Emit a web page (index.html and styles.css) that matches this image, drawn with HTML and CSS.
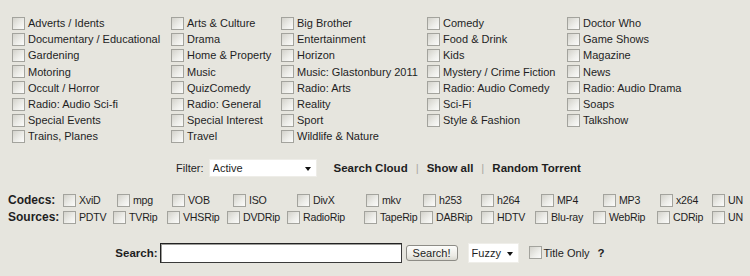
FILE: index.html
```html
<!DOCTYPE html>
<html lang="en">
<head>
<meta charset="UTF-8">
<title>Browse</title>
<link rel="stylesheet" href="styles.css">
</head>
<body>
<form class="browse">
    <div class="cats">
        <div class="cat-col col-1">
            <label><input type="checkbox">Adverts / Idents</label>
            <label><input type="checkbox">Documentary / Educational</label>
            <label><input type="checkbox">Gardening</label>
            <label><input type="checkbox">Motoring</label>
            <label><input type="checkbox">Occult / Horror</label>
            <label><input type="checkbox">Radio: Audio Sci-fi</label>
            <label><input type="checkbox">Special Events</label>
            <label><input type="checkbox">Trains, Planes</label>
        </div>
        <div class="cat-col col-2">
            <label><input type="checkbox">Arts &amp; Culture</label>
            <label><input type="checkbox">Drama</label>
            <label><input type="checkbox">Home &amp; Property</label>
            <label><input type="checkbox">Music</label>
            <label><input type="checkbox">QuizComedy</label>
            <label><input type="checkbox">Radio: General</label>
            <label><input type="checkbox">Special Interest</label>
            <label><input type="checkbox">Travel</label>
        </div>
        <div class="cat-col col-3">
            <label><input type="checkbox">Big Brother</label>
            <label><input type="checkbox">Entertainment</label>
            <label><input type="checkbox">Horizon</label>
            <label><input type="checkbox">Music: Glastonbury 2011</label>
            <label><input type="checkbox">Radio: Arts</label>
            <label><input type="checkbox">Reality</label>
            <label><input type="checkbox">Sport</label>
            <label><input type="checkbox">Wildlife &amp; Nature</label>
        </div>
        <div class="cat-col col-4">
            <label><input type="checkbox">Comedy</label>
            <label><input type="checkbox">Food &amp; Drink</label>
            <label><input type="checkbox">Kids</label>
            <label><input type="checkbox">Mystery / Crime Fiction</label>
            <label><input type="checkbox">Radio: Audio Comedy</label>
            <label><input type="checkbox">Sci-Fi</label>
            <label><input type="checkbox">Style &amp; Fashion</label>
        </div>
        <div class="cat-col col-5">
            <label><input type="checkbox">Doctor Who</label>
            <label><input type="checkbox">Game Shows</label>
            <label><input type="checkbox">Magazine</label>
            <label><input type="checkbox">News</label>
            <label><input type="checkbox">Radio: Audio Drama</label>
            <label><input type="checkbox">Soaps</label>
            <label><input type="checkbox">Talkshow</label>
        </div>
    </div>

    <div class="filter-row">
        <span class="filter-label">Filter:</span>
        <span class="select-wrap filter-select">
            <select>
                <option>Active</option>
                <option>All</option>
                <option>Dead</option>
            </select>
        </span>
        <span class="links">
            <a href="#">Search Cloud</a>
            <span class="sep">|</span>
            <a href="#">Show all</a>
            <span class="sep">|</span>
            <a href="#">Random Torrent</a>
        </span>
    </div>

    <div class="opts codecs">
        <span class="opt-label">Codecs:</span>
        <label><input type="checkbox">XviD</label>
        <label><input type="checkbox">mpg</label>
        <label><input type="checkbox">VOB</label>
        <label><input type="checkbox">ISO</label>
        <label><input type="checkbox">DivX</label>
        <label><input type="checkbox">mkv</label>
        <label><input type="checkbox">h253</label>
        <label><input type="checkbox">h264</label>
        <label><input type="checkbox">MP4</label>
        <label><input type="checkbox">MP3</label>
        <label><input type="checkbox">x264</label>
        <label><input type="checkbox">UN</label>
    </div>
    <div class="opts sources">
        <span class="opt-label">Sources:</span>
        <label><input type="checkbox">PDTV</label>
        <label><input type="checkbox">TVRip</label>
        <label><input type="checkbox">VHSRip</label>
        <label><input type="checkbox">DVDRip</label>
        <label><input type="checkbox">RadioRip</label>
        <label><input type="checkbox">TapeRip</label>
        <label><input type="checkbox">DABRip</label>
        <label><input type="checkbox">HDTV</label>
        <label><input type="checkbox">Blu-ray</label>
        <label><input type="checkbox">WebRip</label>
        <label><input type="checkbox">CDRip</label>
        <label><input type="checkbox">UN</label>
    </div>

    <div class="search-row">
        <span class="search-label">Search:</span>
        <input type="text" class="search-box">
        <button type="button" class="search-btn">Search!</button>
        <span class="select-wrap fuzzy-select">
            <select>
                <option>Fuzzy</option>
                <option>Exact</option>
            </select>
        </span>
        <label class="title-only"><input type="checkbox">Title Only</label>
        <a href="#" class="help">?</a>
    </div>
</form>
</body>
</html>
```

FILE: styles.css
```css
body {
    margin: 0;
    background-color: #e6e5de;
    font-family: "Liberation Sans", Arial, sans-serif;
    font-size: 11px;
    color: #1e1e1e;
}
.browse {
    margin: 0;
}
input[type="checkbox"] {
    -webkit-appearance: none;
    appearance: none;
    width: 13px;
    height: 13px;
    margin: 0 3px 0 0;
    flex: none;
    border: 1px solid #a3a39d;
    background: linear-gradient(135deg, #d3d2cb 0%, #eeeeea 60%, #fbfbfa 100%);
    box-sizing: border-box;
}
label {
    display: flex;
    align-items: center;
    white-space: nowrap;
}

/* category table */
.cats {
    display: flex;
    padding: 15px 0 0 12px;
}
.cat-col label {
    height: 16.2px;
}
.col-1 { width: 159px; }
.col-2 { width: 110px; }
.col-3 { width: 146px; }
.col-4 { width: 140px; }

/* filter line */
.filter-row {
    display: flex;
    align-items: center;
    justify-content: center;
    height: 18px;
    margin-top: 14px;
    padding-left: 7px;
}
.filter-label {
    margin-right: 5px;
}
.select-wrap {
    position: relative;
    display: block;
    background: #fff;
    box-sizing: border-box;
}
.select-wrap select {
    -webkit-appearance: none;
    appearance: none;
    border: none;
    background: transparent;
    font: inherit;
    color: #1e1e1e;
    width: 100%;
    height: 100%;
    padding: 0 0 0 3px;
    margin: 0;
}
.select-wrap::after {
    content: "";
    position: absolute;
    right: 5px;
    top: 50%;
    margin-top: -1px;
    border-left: 3.5px solid transparent;
    border-right: 3.5px solid transparent;
    border-top: 4px solid #111;
}
.filter-select {
    width: 108px;
    height: 18px;
    border: 1px solid #eeede8;
}
.links {
    display: flex;
    align-items: center;
    margin-left: 17px;
    font-weight: bold;
    font-size: 11.5px;
}
.links a {
    color: #1e1e1e;
    text-decoration: none;
}
.sep {
    color: #aaa9a3;
    font-weight: normal;
    margin: 0 8px;
}

/* codecs / sources */
.opts {
    display: grid;
    align-items: center;
    height: 17px;
    padding-left: 8px;
}
.opts label {
    font-size: 10.6px;
    letter-spacing: -0.2px;
}
.codecs {
    margin-top: 15px;
    grid-template-columns: 55px 54px 55px 61px 64px 69px 57px 58px 60px 62px 57px 52px auto;
}
.sources {
    grid-template-columns: 55px 50px 54px 60px 60px 77px 56px 61px 54px 58px 64px 55px auto;
}
.opt-label {
    font-weight: bold;
    font-size: 12px;
}

/* search line */
.search-row {
    display: flex;
    align-items: center;
    justify-content: center;
    height: 20px;
    margin-top: 17px;
    padding-right: 30px;
}
.search-label {
    font-weight: bold;
    font-size: 11.5px;
    margin-right: 2px;
}
.search-box {
    width: 242px;
    height: 20px;
    box-sizing: border-box;
    margin: 0;
    border: 1px solid #3a3a3a;
    border-top-color: #222;
    border-left-color: #222;
    background: #fff;
    box-shadow: inset 1px 1px 0 #9c9c98;
}
.search-btn {
    width: 52px;
    height: 16px;
    margin: 0 0 0 4px;
    padding: 0;
    border: 1px solid #8d8c86;
    border-radius: 3px;
    background: linear-gradient(#fdfdfb, #ebeae4 70%, #d9d8d0);
    font: inherit;
    color: #1e1e1e;
}
.fuzzy-select {
    width: 51px;
    height: 20px;
    margin-left: 10px;
    border: 1px solid #efeee9;
}
.title-only {
    margin-left: 10px;
}
.title-only input {
    margin-right: 2px;
}
.help {
    margin-left: 8px;
    font-weight: bold;
    font-size: 11.5px;
    color: #1e1e1e;
    text-decoration: none;
}
```
